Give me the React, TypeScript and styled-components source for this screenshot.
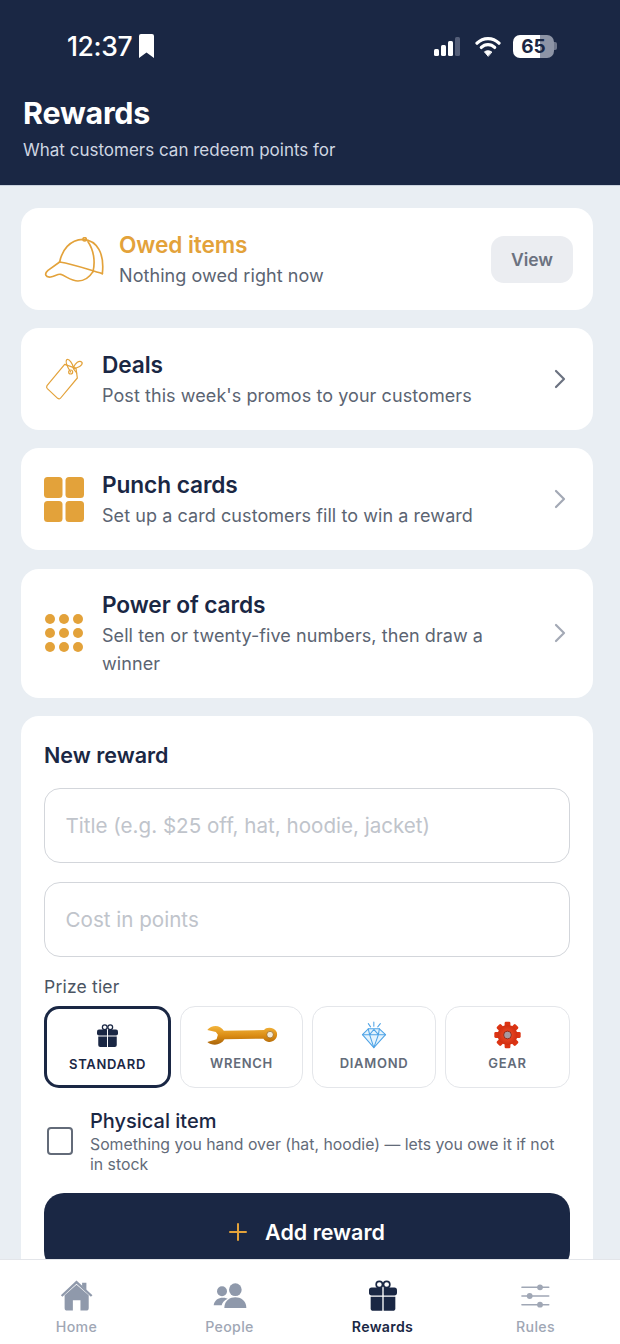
import React from 'react';
import styled, { createGlobalStyle } from 'styled-components';

const navy = '#1a2744';
const amber = '#e3a23a';

const GlobalStyle = createGlobalStyle`
    html, body {
        margin: 0;
        padding: 0;
        background: #e9eef3;
        font-family: Inter, "Liberation Sans", sans-serif;
    }
    * {
        box-sizing: border-box;
    }
`;

const Screen = styled.div`
    width: 620px;
    height: 1344px;
    display: flex;
    flex-direction: column;
    overflow: hidden;
`;

const Header = styled.header`
    height: 186px;
    flex-shrink: 0;
    background: ${navy};
    border-bottom: 1px solid #c9d2de;
    padding: 31px 23px 0;
    color: #fff;
`;

const StatusBar = styled.div`
    display: flex;
    align-items: center;
    justify-content: space-between;
    height: 30px;
    padding: 0 40px 0 44px;
    margin-bottom: 34px;
`;

const StatusGroup = styled.div<{ $gap: number }>`
    display: flex;
    align-items: center;
    gap: ${(p) => p.$gap}px;
`;

const Clock = styled.span`
    font-size: 26.5px;
    font-weight: 500;
    letter-spacing: -0.4px;
`;

const SignalIcon = styled.svg`
    margin-right: 3px;
`;

const Battery = styled.div`
    width: 41px;
    height: 23px;
    border-radius: 7px;
    background: linear-gradient(90deg, #fff 0 66%, #8d94a6 66% 100%);
    color: ${navy};
    font-size: 19px;
    font-weight: 700;
    line-height: 23px;
    text-align: center;
`;

const BatteryNub = styled.div`
    width: 3px;
    height: 8px;
    margin-left: -12px;
    border-radius: 0 2px 2px 0;
    background: #6f778c;
`;

const PageTitle = styled.h1`
    margin: 0;
    font-size: 30.4px;
    line-height: 36px;
    font-weight: 700;
    letter-spacing: -0.2px;
`;

const PageSubtitle = styled.p`
    margin: 8px 0 0;
    font-size: 17px;
    line-height: 22px;
    color: #cfd6e2;
`;

const Content = styled.main`
    flex: 1;
    min-height: 0;
    overflow: hidden;
    display: flex;
    flex-direction: column;
    gap: 18.2px;
    padding: 22px 27px 0 21px;
`;

const Card = styled.section`
    flex-shrink: 0;
    background: #fff;
    border-radius: 18px;
`;

const RowCard = styled(Card)`
    display: flex;
    align-items: center;
    min-height: 102px;
    padding: 19.5px 23px;
`;

const RowIcon = styled.div<{ $width: number; $gap: number }>`
    flex-shrink: 0;
    width: ${(p) => p.$width}px;
    margin-right: ${(p) => p.$gap}px;
    display: flex;
    align-items: center;
`;

const RowText = styled.div`
    flex: 1;
    min-width: 0;
    padding-top: 2px;
`;

const RowTitle = styled.div<{ $accent?: boolean }>`
    font-size: 22.7px;
    line-height: 30px;
    font-weight: 600;
    letter-spacing: -0.1px;
    color: ${(p) => (p.$accent ? amber : navy)};
`;

const RowSub = styled.div`
    margin-top: 2px;
    font-size: 18px;
    line-height: 28px;
    letter-spacing: 0.07px;
    color: #5b6472;
    max-width: 400px;
`;

const ViewButton = styled.button`
    width: 82px;
    height: 47px;
    margin-right: -3px;
    border: 0;
    border-radius: 13px;
    background: #ebedf1;
    color: #6b7280;
    font: 600 17.5px Inter, sans-serif;
`;

const Chevron = styled.svg<{ $light?: boolean }>`
    flex-shrink: 0;
    width: 14px;
    height: 20px;
    margin-right: 3px;
    fill: none;
    stroke: ${(p) => (p.$light ? '#a3a9b5' : '#6b7280')};
    stroke-width: 2.2;
    stroke-linecap: round;
    stroke-linejoin: round;
`;

const FormCard = styled(Card)`
    padding: 24px 23px 0;
    height: 600px;
`;

const FormTitle = styled.h2`
    margin: 0 0 18px;
    font-size: 21.5px;
    line-height: 30px;
    font-weight: 600;
    color: ${navy};
`;

const Field = styled.div`
    height: 75px;
    margin-bottom: 19px;
    padding-left: 20.5px;
    display: flex;
    align-items: center;
    border: 1.7px solid #d3d6db;
    border-radius: 16px;
    color: #c0c4cb;
    font-size: 20.6px;
`;

const FieldLabel = styled.div`
    margin-top: -1px;
    font-size: 17.5px;
    line-height: 24px;
    letter-spacing: 0.2px;
    color: #4b5563;
`;

const TierGrid = styled.div`
    display: grid;
    grid-template-columns: 127px 123px 124px 125px;
    gap: 9px;
    margin-top: 7px;
`;

const Tier = styled.div<{ $active?: boolean }>`
    height: 82px;
    border-radius: 15px;
    border: ${(p) => (p.$active ? `3px solid ${navy}` : '1.5px solid #e4e6ea')};
    display: flex;
    flex-direction: column;
    align-items: center;
    justify-content: flex-start;
    padding-top: ${(p) => (p.$active ? 14 : 15)}px;
    color: ${(p) => (p.$active ? navy : '#636b79')};
    font-size: 13px;
    font-weight: 600;
    letter-spacing: 0.7px;
`;

const TierArt = styled.div`
    height: 26px;
    display: flex;
    align-items: center;
    justify-content: center;
    margin-bottom: 7px;
`;

const PhysicalRow = styled.div`
    display: flex;
    align-items: center;
    margin-top: 20px;
`;

const CheckBox = styled.div`
    flex-shrink: 0;
    width: 26px;
    height: 28px;
    margin: 0 17px 0 3px;
    border: 2.5px solid #636b79;
    border-radius: 4px;
`;

const PhysicalTitle = styled.div`
    font-size: 20px;
    line-height: 26px;
    font-weight: 500;
    color: ${navy};
`;

const PhysicalSub = styled.div`
    margin-top: 1px;
    font-size: 15.8px;
    line-height: 20px;
    color: #636b79;
`;

const AddButton = styled.button`
    width: 100%;
    height: 78px;
    margin-top: 18px;
    border: 0;
    border-radius: 20px;
    background: ${navy};
    color: #fff;
    display: flex;
    align-items: center;
    justify-content: center;
    gap: 18px;
    font: 600 21.5px Inter, sans-serif;
`;

const TabBar = styled.nav`
    height: 85px;
    flex-shrink: 0;
    background: #fff;
    border-top: 1px solid #e3e5e9;
    display: grid;
    grid-template-columns: repeat(4, 153px);
`;

const Tab = styled.div<{ $active?: boolean }>`
    display: flex;
    flex-direction: column;
    align-items: center;
    color: ${(p) => (p.$active ? navy : '#a0a7b5')};
    font-size: 14.2px;
    font-weight: ${(p) => (p.$active ? 600 : 500)};
    letter-spacing: 0.3px;
`;

const TabArt = styled.div`
    height: 37px;
    margin: 17px 0 4px;
    display: flex;
    align-items: center;
`;

const Gift = ({ width, height, color }: { width: number; height: number; color: string }) => (
    <svg width={width} height={height} viewBox="0 0 84 92">
        <circle cx="31" cy="13" r="9.5" fill="none" stroke={color} strokeWidth="5" />
        <circle cx="53" cy="13" r="9.5" fill="none" stroke={color} strokeWidth="5" />
        <path d="M8 22 H40 V46 H8 Q0 46 0 38 V30 Q0 22 8 22Z" fill={color} />
        <path d="M44 22 H76 Q84 22 84 30 V38 Q84 46 76 46 H44Z" fill={color} />
        <path d="M5 50 H40 V92 H13 Q5 92 5 84Z" fill={color} />
        <path d="M44 50 H79 V84 Q79 92 71 92 H44Z" fill={color} />
    </svg>
);

const Wrench = () => (
    <svg width="72" height="22" viewBox="526 72 218 66">
        <defs>
            <linearGradient id="wrenchGold" x1="0" y1="0" x2="0" y2="1">
                <stop offset="0" stopColor="#f3b53d" />
                <stop offset="0.55" stopColor="#d98a12" />
                <stop offset="1" stopColor="#a9650c" />
            </linearGradient>
        </defs>
        <path
            d="M530 90 C542 74 568 72 580 92 L702 90 C708 80 732 80 740 96 C746 114 730 128 716 126 C708 125 702 120 700 116 L582 118 C570 138 544 138 530 126 L558 118 L562 104 L556 96Z"
            fill="url(#wrenchGold)"
        />
        <circle cx="720" cy="104" r="10" fill="#f3ead6" stroke="#8d5a10" strokeWidth="2" />
    </svg>
);

const Diamond = () => (
    <svg width="26" height="28" viewBox="183 62 77 86" fill="none" stroke="#4ea3e6" strokeWidth="3.2" strokeLinejoin="round" strokeLinecap="round">
        <path d="M204 70 L211 80 M221 65 V78 M241 70 L233 80" />
        <path d="M204 86 H238 L257 104 L221 144 L186 104Z" fill="#e4f3fd" />
        <path d="M186 104 H257 M204 86 L208 104 L221 144 L235 104 L238 86 M208 104 L221 88 L235 104" />
    </svg>
);

const gearTeeth = [0, 45, 90, 135, 180, 225, 270, 315];

const Gear = () => (
    <svg width="27" height="28" viewBox="-42 -42 84 84">
        <defs>
            <radialGradient id="gearRed" r="0.6">
                <stop offset="0" stopColor="#f4522a" />
                <stop offset="1" stopColor="#c9270c" />
            </radialGradient>
        </defs>
        {gearTeeth.map((a) => (
            <rect key={a} x="-9" y="-41" width="18" height="20" rx="4" fill="#dc3413" transform={`rotate(${a})`} />
        ))}
        <circle r="31" fill="url(#gearRed)" />
        <circle r="12" fill="#a79aa0" stroke="#8e1d08" strokeWidth="2.5" />
    </svg>
);

const Home = () => (
    <svg width="33" height="32" viewBox="178 120 100 96" fill="#8f99ab">
        <path d="M245 128 H258 V150 L245 138Z" />
        <path d="M183 168 L228 126 L274 168" fill="none" stroke="#8f99ab" strokeWidth="7" />
        <path d="M192 166 L228 134 L265 166 V204 Q265 212 257 212 H240 V181 H217 V212 H200 Q192 212 192 204Z" />
    </svg>
);

const People = () => (
    <svg width="34" height="26" viewBox="638 130 102 78" fill="#8f99ab">
        <circle cx="705" cy="150" r="19" />
        <circle cx="665" cy="155" r="15" />
        <path d="M672 205 C672 182 690 173 705 173 C720 173 738 182 738 205Z" />
        <path d="M640 197 C642 181 654 174 668 174 C676 174 680 176 682 177 C672 182 666 188 664 197Z" />
    </svg>
);

const Sliders = () => (
    <svg width="29" height="26" viewBox="633 130 90 76" fill="#a0a7b5">
        <path d="M636 141 H719 M636 168 H719 M636 195 H719" stroke="#a0a7b5" strokeLinecap="round" strokeWidth="5" fill="none" />
        <circle cx="692" cy="141" r="9" />
        <circle cx="660" cy="168" r="9" />
        <circle cx="692" cy="195" r="9" />
    </svg>
);

const RowChevron = ({ light }: { light?: boolean }) => (
    <Chevron $light={light} viewBox="0 0 14 20">
        <path d="M3 2 L11 10 L3 18" />
    </Chevron>
);

export default function App() {
    return (
        <>
            <GlobalStyle />
            <Screen>
                <Header>
                    <StatusBar>
                        <StatusGroup $gap={7}>
                            <Clock>12:37</Clock>
                            <svg width="15" height="24" viewBox="0 0 15 24">
                                <path d="M2 0 H13 Q15 0 15 2 V24 L7.5 18.5 L0 24 V2 Q0 0 2 0Z" fill="#fff" />
                            </svg>
                        </StatusGroup>
                        <StatusGroup $gap={12}>
                            <SignalIcon width="26" height="19" viewBox="0 0 26 19">
                                <rect x="0" y="12" width="5" height="7" rx="1.5" fill="#fff" />
                                <rect x="7" y="8" width="5" height="11" rx="1.5" fill="#fff" />
                                <rect x="14" y="4" width="5" height="15" rx="1.5" fill="#fff" />
                                <rect x="21" y="0" width="5" height="19" rx="1.5" fill="#545e78" />
                            </SignalIcon>
                            <svg width="26" height="21" viewBox="0 0 27 22" fill="none" stroke="#fff" strokeWidth="3.4" strokeLinecap="round">
                                <path d="M2 7.5 C8.5 1 18.5 1 25 7.5" />
                                <path d="M6.5 12 C10.5 8 16.5 8 20.5 12" />
                                <path d="M13.5 21 L9.8 16.6 C12 15 15 15 17.2 16.6Z" fill="#fff" strokeWidth="1" strokeLinejoin="round" />
                            </svg>
                            <Battery>65</Battery>
                            <BatteryNub />
                        </StatusGroup>
                    </StatusBar>
                    <PageTitle>Rewards</PageTitle>
                    <PageSubtitle>What customers can redeem points for</PageSubtitle>
                </Header>

                <Content>
                    <RowCard>
                        <RowIcon $width={60} $gap={15}>
                            <svg width="60" height="45" viewBox="68 110 180 135" fill="none" stroke={amber} strokeWidth="5" strokeLinecap="round" strokeLinejoin="round">
                                <circle cx="190" cy="117" r="5" />
                                <path d="M115 185 C122 150 145 118 185 117 C228 120 250 160 243 220" />
                                <path d="M115 185 C160 192 200 208 243 220" />
                                <path d="M200 124 C218 150 222 185 215 214" />
                                <path d="M115 185 L80 210 C68 220 72 232 88 230 C100 228 110 220 118 222 C135 228 150 242 170 242 C190 242 205 230 215 214" />
                            </svg>
                        </RowIcon>
                        <RowText>
                            <RowTitle $accent>Owed items</RowTitle>
                            <RowSub>Nothing owed right now</RowSub>
                        </RowText>
                        <ViewButton>View</ViewButton>
                    </RowCard>

                    <RowCard>
                        <RowIcon $width={40} $gap={18}>
                            <svg width="40" height="44" viewBox="72 472 120 132" fill="none" stroke={amber} strokeWidth="3.6" strokeLinecap="round" strokeLinejoin="round">
                                <path d="M134 494 L81 558 Q78 563 82 567 L113 596 Q118 600 122 595 L172 535 L168 506 Z" />
                                <circle cx="152" cy="517" r="6" />
                                <path d="M152 517 C144 505 134 488 140 480 C148 476 160 495 160 505 C165 490 178 480 186 488 C190 498 172 505 160 507 L170 520" />
                            </svg>
                        </RowIcon>
                        <RowText>
                            <RowTitle>Deals</RowTitle>
                            <RowSub>Post this week's promos to your customers</RowSub>
                        </RowText>
                        <RowChevron />
                    </RowCard>

                    <RowCard>
                        <RowIcon $width={40} $gap={18}>
                            <svg width="40" height="45" viewBox="0 0 40 45" fill={amber}>
                                <rect x="0" y="0" width="18.5" height="21" rx="3.5" />
                                <rect x="21.5" y="0" width="18.5" height="21" rx="3.5" />
                                <rect x="0" y="24" width="18.5" height="21" rx="3.5" />
                                <rect x="21.5" y="24" width="18.5" height="21" rx="3.5" />
                            </svg>
                        </RowIcon>
                        <RowText>
                            <RowTitle>Punch cards</RowTitle>
                            <RowSub>Set up a card customers fill to win a reward</RowSub>
                        </RowText>
                        <RowChevron light />
                    </RowCard>

                    <RowCard>
                        <RowIcon $width={40} $gap={18}>
                            <svg width="40" height="42" viewBox="0 0 40 42" fill={amber}>
                                {[6, 20, 34].map((cy) =>
                                    [6, 20, 34].map((cx) => <circle key={`${cx}-${cy}`} cx={cx} cy={cy + 1} r="5" />),
                                )}
                            </svg>
                        </RowIcon>
                        <RowText>
                            <RowTitle>Power of cards</RowTitle>
                            <RowSub>Sell ten or twenty-five numbers, then draw a winner</RowSub>
                        </RowText>
                        <RowChevron light />
                    </RowCard>

                    <FormCard>
                        <FormTitle>New reward</FormTitle>
                        <Field>Title (e.g. $25 off, hat, hoodie, jacket)</Field>
                        <Field>Cost in points</Field>
                        <FieldLabel>Prize tier</FieldLabel>
                        <TierGrid>
                            <Tier $active>
                                <TierArt>
                                    <Gift width={21} height={23} color={navy} />
                                </TierArt>
                                STANDARD
                            </Tier>
                            <Tier>
                                <TierArt>
                                    <Wrench />
                                </TierArt>
                                WRENCH
                            </Tier>
                            <Tier>
                                <TierArt>
                                    <Diamond />
                                </TierArt>
                                DIAMOND
                            </Tier>
                            <Tier>
                                <TierArt>
                                    <Gear />
                                </TierArt>
                                GEAR
                            </Tier>
                        </TierGrid>
                        <PhysicalRow>
                            <CheckBox />
                            <div>
                                <PhysicalTitle>Physical item</PhysicalTitle>
                                <PhysicalSub>Something you hand over (hat, hoodie) — lets you owe it if not in stock</PhysicalSub>
                            </div>
                        </PhysicalRow>
                        <AddButton>
                            <svg width="18" height="18" viewBox="0 0 18 18" stroke={amber} strokeWidth="2" strokeLinecap="round">
                                <path d="M9 1 V17 M1 9 H17" />
                            </svg>
                            Add reward
                        </AddButton>
                    </FormCard>
                </Content>

                <TabBar>
                    <Tab>
                        <TabArt>
                            <Home />
                        </TabArt>
                        Home
                    </Tab>
                    <Tab>
                        <TabArt>
                            <People />
                        </TabArt>
                        People
                    </Tab>
                    <Tab $active>
                        <TabArt>
                            <Gift width={28} height={31} color={navy} />
                        </TabArt>
                        Rewards
                    </Tab>
                    <Tab>
                        <TabArt>
                            <Sliders />
                        </TabArt>
                        Rules
                    </Tab>
                </TabBar>
            </Screen>
        </>
    );
}
